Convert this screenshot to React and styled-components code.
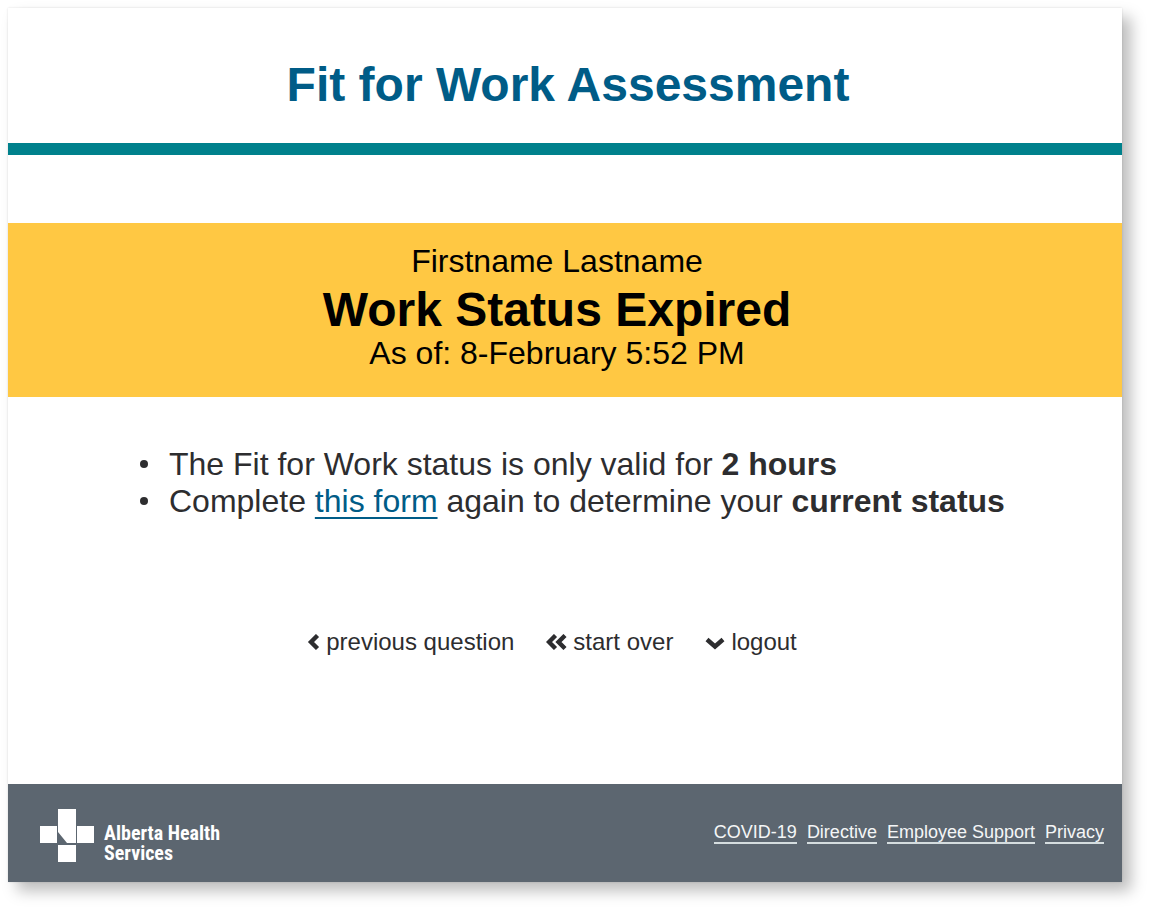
import React from "react";
import styled, { createGlobalStyle } from "styled-components";

const GlobalStyle = createGlobalStyle`
  * { box-sizing: border-box; }
  body {
    margin: 0;
    background: #fff;
    color: #2d2d2f;
    font-family: "Liberation Sans", Arial, sans-serif;
  }
`;

const Page = styled.div`
  padding: 8px 28px 27px 8px;
`;

const Card = styled.div`
  background: #fff;
  box-shadow: 9px 9px 14px rgba(0, 0, 0, 0.26), 0 0 2px rgba(0, 0, 0, 0.12);
`;

const Header = styled.header`
  padding: 49px 0 30px 6px;
  border-bottom: 12px solid #00818c;
  text-align: center;
`;

const Title = styled.h1`
  margin: 0;
  color: #005c87;
  font-size: 48px;
  line-height: 56px;
`;

const Banner = styled.section`
  margin-top: 68px;
  padding: 20px 16px 26px 0;
  background: #ffc843;
  color: #000;
  text-align: center;
`;

const BannerLine = styled.p`
  margin: 0;
  font-size: 32px;
  line-height: 36px;
`;

const Status = styled.h2`
  margin: 0;
  padding-top: 6px;
  font-size: 48px;
  line-height: 50px;
`;

const Notes = styled.ul`
  margin: 0;
  padding: 49px 0 0 161px;
  font-size: 32px;
  line-height: 37px;
  list-style: none;
`;

const Note = styled.li`
  display: flex;
  margin-left: -30px;

  &::before {
    content: "";
    flex: none;
    width: 8px;
    height: 8px;
    margin: 14px 21px 0 1px;
    border-radius: 50%;
    background: #2d2d2f;
  }
`;

const FormLink = styled.a`
  color: #005c87;
  text-decoration: underline;
  text-decoration-thickness: 2px;
  text-underline-offset: 5px;
  text-decoration-skip-ink: none;
`;

const Actions = styled.nav`
  display: flex;
  justify-content: center;
  gap: 32px;
  padding: 108px 26px 128px 0;
`;

const Action = styled.button`
  display: flex;
  align-items: center;
  gap: 6px;
  padding: 0;
  border: 0;
  background: none;
  color: inherit;
  font-family: inherit;
  font-size: 24px;
  line-height: 28px;
  cursor: pointer;
`;

const Chevron = styled.svg`
  fill: none;
  stroke: #2d2d2f;
  stroke-width: 4.4;
`;

const Footer = styled.footer`
  display: flex;
  align-items: center;
  justify-content: space-between;
  min-height: 98px;
  padding: 0 18px 0 32px;
  background: #5c6670;
  color: #fff;
`;

const Brand = styled.div`
  display: flex;
  align-items: center;
  gap: 10px;
  padding-top: 4px;
`;

const BrandName = styled.div`
  padding-top: 16px;
  font-family: "Roboto Condensed", Roboto, "Liberation Sans", sans-serif;
  font-size: 20px;
  font-weight: 700;
  line-height: 20px;
`;

const FooterLinks = styled.nav`
  display: flex;
  gap: 10px;
`;

const FooterLink = styled.a`
  border-bottom: 2px solid #d5dddf;
  color: #f4f6f7;
  font-size: 18px;
  line-height: 20px;
  text-decoration: none;
`;

const links = ["COVID-19", "Directive", "Employee Support", "Privacy"];

export default function App() {
  return (
    <Page>
      <GlobalStyle />
      <Card>
        <Header>
          <Title>Fit for Work Assessment</Title>
        </Header>
        <main>
          <Banner>
            <BannerLine>Firstname Lastname</BannerLine>
            <Status>Work Status Expired</Status>
            <BannerLine>As of: 8-February 5:52 PM</BannerLine>
          </Banner>
          <Notes>
            <Note>
              <span>
                The Fit for Work status is only valid for <b>2 hours</b>
              </span>
            </Note>
            <Note>
              <span>
                Complete <FormLink href="#form">this form</FormLink> again to determine your{" "}
                <b>current status</b>
              </span>
            </Note>
          </Notes>
          <Actions>
            <Action type="button">
              <Chevron width="13" height="16" viewBox="0 0 13 16" aria-hidden="true">
                <path d="M10.5 1.5 4 8l6.5 6.5" />
              </Chevron>
              previous question
            </Action>
            <Action type="button">
              <Chevron width="21" height="16" viewBox="0 0 21 16" aria-hidden="true">
                <path d="M9.5 1.5 3 8l6.5 6.5M19 1.5 12.5 8l6.5 6.5" />
              </Chevron>
              start over
            </Action>
            <Action type="button">
              <Chevron width="20" height="16" viewBox="0 0 20 16" aria-hidden="true">
                <path d="M2 5.5 10 12.5 18 5.5" />
              </Chevron>
              logout
            </Action>
          </Actions>
        </main>
        <Footer>
          <Brand>
            <svg width="54" height="53" viewBox="0 0 54 53" fill="#fff" aria-hidden="true">
              <path d="M18 0h18v34h-9L18 23zM0 17h17v17H0zM37 17h17v17H37zM18 36h18v17H18z" />
            </svg>
            <BrandName>
              Alberta Health
              <br />
              Services
            </BrandName>
          </Brand>
          <FooterLinks>
            {links.map((label) => (
              <FooterLink href="#info" key={label}>
                {label}
              </FooterLink>
            ))}
          </FooterLinks>
        </Footer>
      </Card>
    </Page>
  );
}
